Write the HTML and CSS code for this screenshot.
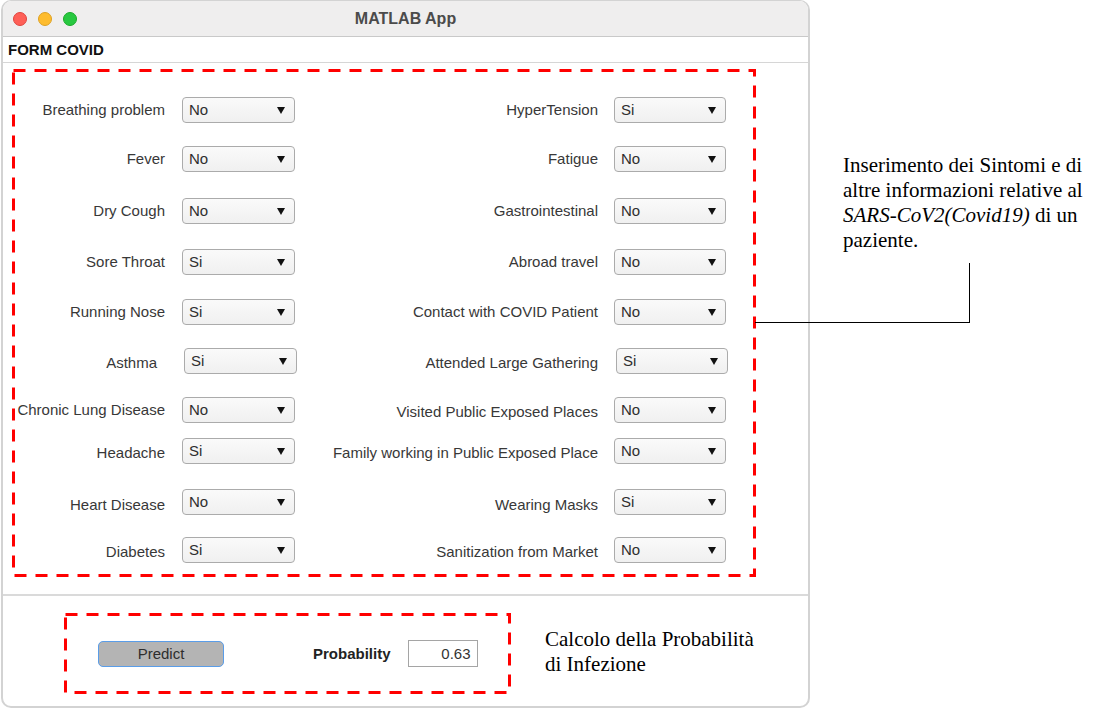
FILE: index.html
```html
<!DOCTYPE html>
<html lang="it">
<head>
<meta charset="utf-8">
<title>MATLAB App</title>
<link rel="stylesheet" href="styles.css">
</head>
<body>
<div class="page">
  <div class="window">
    <div class="titlebar">
      <div class="lights">
        <span class="light red"></span>
        <span class="light yellow"></span>
        <span class="light green"></span>
      </div>
      <div class="title">MATLAB App</div>
      <div></div>
    </div>
    <div class="panel-title">FORM COVID</div>
    <div class="panel-body">
      <div class="box box1">
        <svg class="dash" width="744" height="508" viewBox="0 0 744 508"><rect x="1.5" y="1.5" width="741" height="505" fill="none" stroke="#ff0000" stroke-width="3" stroke-dasharray="12 9"/></svg>
        <div class="form">
          <div class="lbl">Breathing problem</div><div class="dd">No</div>
          <div class="lbl">HyperTension</div><div class="dd r">Si</div>

          <div class="lbl">Fever</div><div class="dd">No</div>
          <div class="lbl">Fatigue</div><div class="dd r">No</div>

          <div class="lbl">Dry Cough</div><div class="dd">No</div>
          <div class="lbl">Gastrointestinal</div><div class="dd r">No</div>

          <div class="lbl">Sore Throat</div><div class="dd">Si</div>
          <div class="lbl">Abroad travel</div><div class="dd r">No</div>

          <div class="lbl">Running Nose</div><div class="dd">Si</div>
          <div class="lbl">Contact with COVID Patient</div><div class="dd r">No</div>

          <div class="lbl d2 asthma">Asthma</div><div class="dd s">Si</div>
          <div class="lbl d2">Attended Large Gathering</div><div class="dd r s">Si</div>

          <div class="lbl">Chronic Lung Disease</div><div class="dd">No</div>
          <div class="lbl d2">Visited Public Exposed Places</div><div class="dd r">No</div>

          <div class="lbl d2">Headache</div><div class="dd">Si</div>
          <div class="lbl d2">Family working in Public Exposed Place</div><div class="dd r">No</div>

          <div class="lbl d3">Heart Disease</div><div class="dd">No</div>
          <div class="lbl d3">Wearing Masks</div><div class="dd r">Si</div>

          <div class="lbl d2">Diabetes</div><div class="dd">Si</div>
          <div class="lbl d2">Sanitization from Market</div><div class="dd r">No</div>
        </div>
      </div>
    </div>
    <div class="footer">
      <div class="box box2">
        <svg class="dash" width="447" height="81" viewBox="0 0 447 81"><rect x="1.5" y="1.5" width="444" height="78" fill="none" stroke="#ff0000" stroke-width="3" stroke-dasharray="12 9"/></svg>
        <div class="btn">Predict</div>
        <div class="prob-label">Probability</div>
        <div class="prob-field">0.63</div>
      </div>
      <div class="note note2">Calcolo della Probabilità<br>di Infezione</div>
    </div>
  </div>
  <div class="note note1">Inserimento dei Sintomi e di<br>altre informazioni relative al<br><i>SARS-CoV2(Covid19)</i> di un<br>paziente.</div>
  <div class="connector"></div>
</div>
</body>
</html>
```
FILE: styles.css
```css
body {
  margin: 0;
  background: #ffffff;
  font-family: "Liberation Sans", Arial, sans-serif;
}

.page {
  position: relative;
  display: flex;
  align-items: flex-start;
  width: 1109px;
  height: 712px;
}

.window {
  box-sizing: border-box;
  margin-left: 1px;
  width: 809px;
  height: 708px;
  border: 2px solid #d3d3d3;
  border-top-width: 1px;
  border-radius: 10px;
  overflow: hidden;
  display: flex;
  flex-direction: column;
  background: #ffffff;
  flex-shrink: 0;
}

.titlebar {
  height: 35px;
  border-bottom: 1px solid #c9c9c9;
  background: #efeeee;
  display: grid;
  grid-template-columns: 1fr auto 1fr;
  align-items: center;
}

.lights {
  display: flex;
  gap: 11px;
  padding-left: 10px;
}

.light {
  width: 14px;
  height: 14px;
  border-radius: 50%;
  box-sizing: border-box;
}

.red { background: #fe5f57; border: 0.5px solid #e0443e; }
.yellow { background: #febc2e; border: 0.5px solid #dea123; }
.green { background: #28c840; border: 0.5px solid #1aab29; }

.title {
  font-weight: bold;
  font-size: 16px;
  color: #4b4b4b;
}

.panel-title {
  height: 25px;
  border-bottom: 1px solid #d6d6d6;
  font-weight: bold;
  font-size: 15px;
  line-height: 25px;
  padding-left: 5px;
  color: #111111;
}

.panel-body {
  padding: 6px 0 17px 9px;
  border-bottom: 2px solid #dadada;
}

.box {
  position: relative;
  box-sizing: border-box;
}

.dash {
  position: absolute;
  left: 0;
  top: 0;
  pointer-events: none;
}

.box1 {
  width: 744px;
  height: 508px;
}

.form {
  display: grid;
  grid-template-columns: 153px 130px 303px 128px;
  grid-template-rows: 49px 52px 51px 50px 49px 49px 41px 51px 48px 26px;
  padding-top: 28px;
  align-items: start;
}

.lbl {
  font-size: 15px;
  color: #383838;
  line-height: 26px;
  text-align: right;
  white-space: nowrap;
}

.lbl.d2 { padding-top: 2px; }
.lbl.d3 { padding-top: 3px; }
.lbl.asthma { padding-right: 8px; }

.dd {
  position: relative;
  box-sizing: border-box;
  margin-left: 17px;
  width: 113px;
  height: 26px;
  border: 1px solid #ababab;
  border-radius: 4px;
  background: linear-gradient(#fafafa, #f0f0f0);
  font-size: 15px;
  color: #2e2e2e;
  line-height: 23px;
  padding-left: 6px;
}

.dd.r {
  margin-left: 16px;
  width: 112px;
}

.dd.s { margin-left: 19px; }
.dd.r.s { margin-left: 18px; }

.dd::after {
  content: "";
  position: absolute;
  right: 9px;
  top: 9px;
  border-left: 4.5px solid transparent;
  border-right: 4.5px solid transparent;
  border-top: 7px solid #111111;
}

.footer {
  flex: 1;
  display: flex;
  align-items: flex-start;
}

.box2 {
  margin: 17px 0 0 61px;
  width: 447px;
  height: 81px;
  display: flex;
  align-items: center;
}

.btn {
  box-sizing: border-box;
  margin-left: 34px;
  width: 126px;
  height: 26px;
  border: 1.5px solid #5a9de8;
  border-radius: 5px;
  background: #b4b4b4;
  font-size: 15px;
  color: #2e2e2e;
  text-align: center;
  line-height: 23px;
}

.prob-label {
  margin-left: 89px;
  font-weight: bold;
  font-size: 15px;
  color: #222222;
}

.prob-field {
  box-sizing: border-box;
  margin-left: 17px;
  width: 70px;
  height: 27px;
  border: 1px solid #a5a5a5;
  background: #ffffff;
  font-size: 15px;
  color: #333333;
  text-align: right;
  padding-right: 6px;
  line-height: 25px;
}

.note {
  font-family: "Liberation Serif", "Times New Roman", serif;
  font-size: 21px;
  line-height: 25px;
  color: #000000;
  white-space: nowrap;
}

.note1 {
  margin-left: 33px;
  padding-top: 153px;
}

.note2 {
  margin: 31px 0 0 34px;
}

.connector {
  position: absolute;
  left: 755px;
  top: 263px;
  width: 214px;
  height: 59px;
  border-right: 1px solid #000000;
  border-bottom: 1px solid #000000;
}
```
